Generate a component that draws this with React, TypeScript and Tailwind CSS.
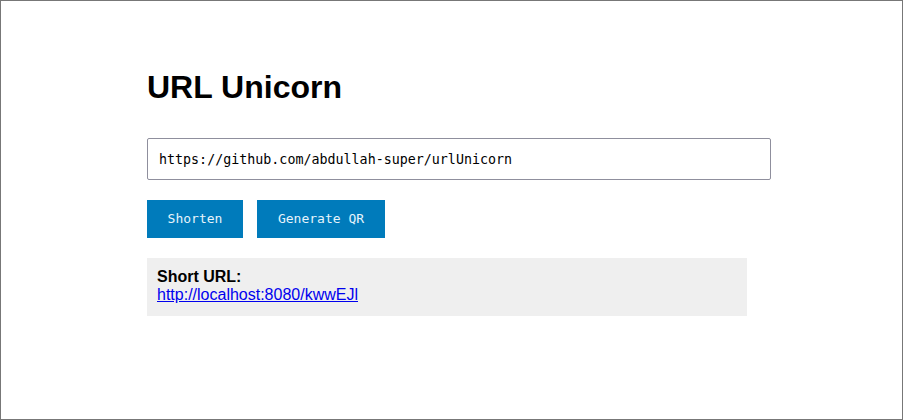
export default function App() {
  const mono = { fontFamily: '"DejaVu Sans Mono", "Liberation Mono", monospace' };

  return (
    <div className="h-screen w-full border border-[#777] bg-white" style={{ fontFamily: '"Liberation Sans", Arial, sans-serif' }}>
      <div className="ml-[146px] pt-[68px]">
        <h1 className="text-[32px] leading-[37px] font-bold text-black">URL Unicorn</h1>

        <input
          type="text"
          defaultValue="https://github.com/abdullah-super/urlUnicorn"
          className="mt-[32px] block h-[42px] w-[624px] rounded-[2px] border border-[#8f8f9d] px-[11px] text-[13.33px] text-black outline-none"
          style={mono}
        />

        <div className="mt-[20px] flex gap-[14px]">
          <button className="h-[38px] w-[96px] bg-[#007bbb] text-[13px] text-[#e6f4fb]" style={mono}>
            Shorten
          </button>
          <button className="h-[38px] w-[128px] bg-[#007bbb] text-[13px] text-[#e6f4fb]" style={mono}>
            Generate QR
          </button>
        </div>

        <div className="mt-[20px] w-[600px] bg-[#efefef] px-[10px] pt-[10px] pb-[11px] text-[16px] leading-[18.4px]">
          <div className="font-bold text-black">Short URL:</div>
          <a href="#" className="text-[#0000ee] underline">
            http://localhost:8080/kwwEJl
          </a>
        </div>
      </div>
    </div>
  );
}
